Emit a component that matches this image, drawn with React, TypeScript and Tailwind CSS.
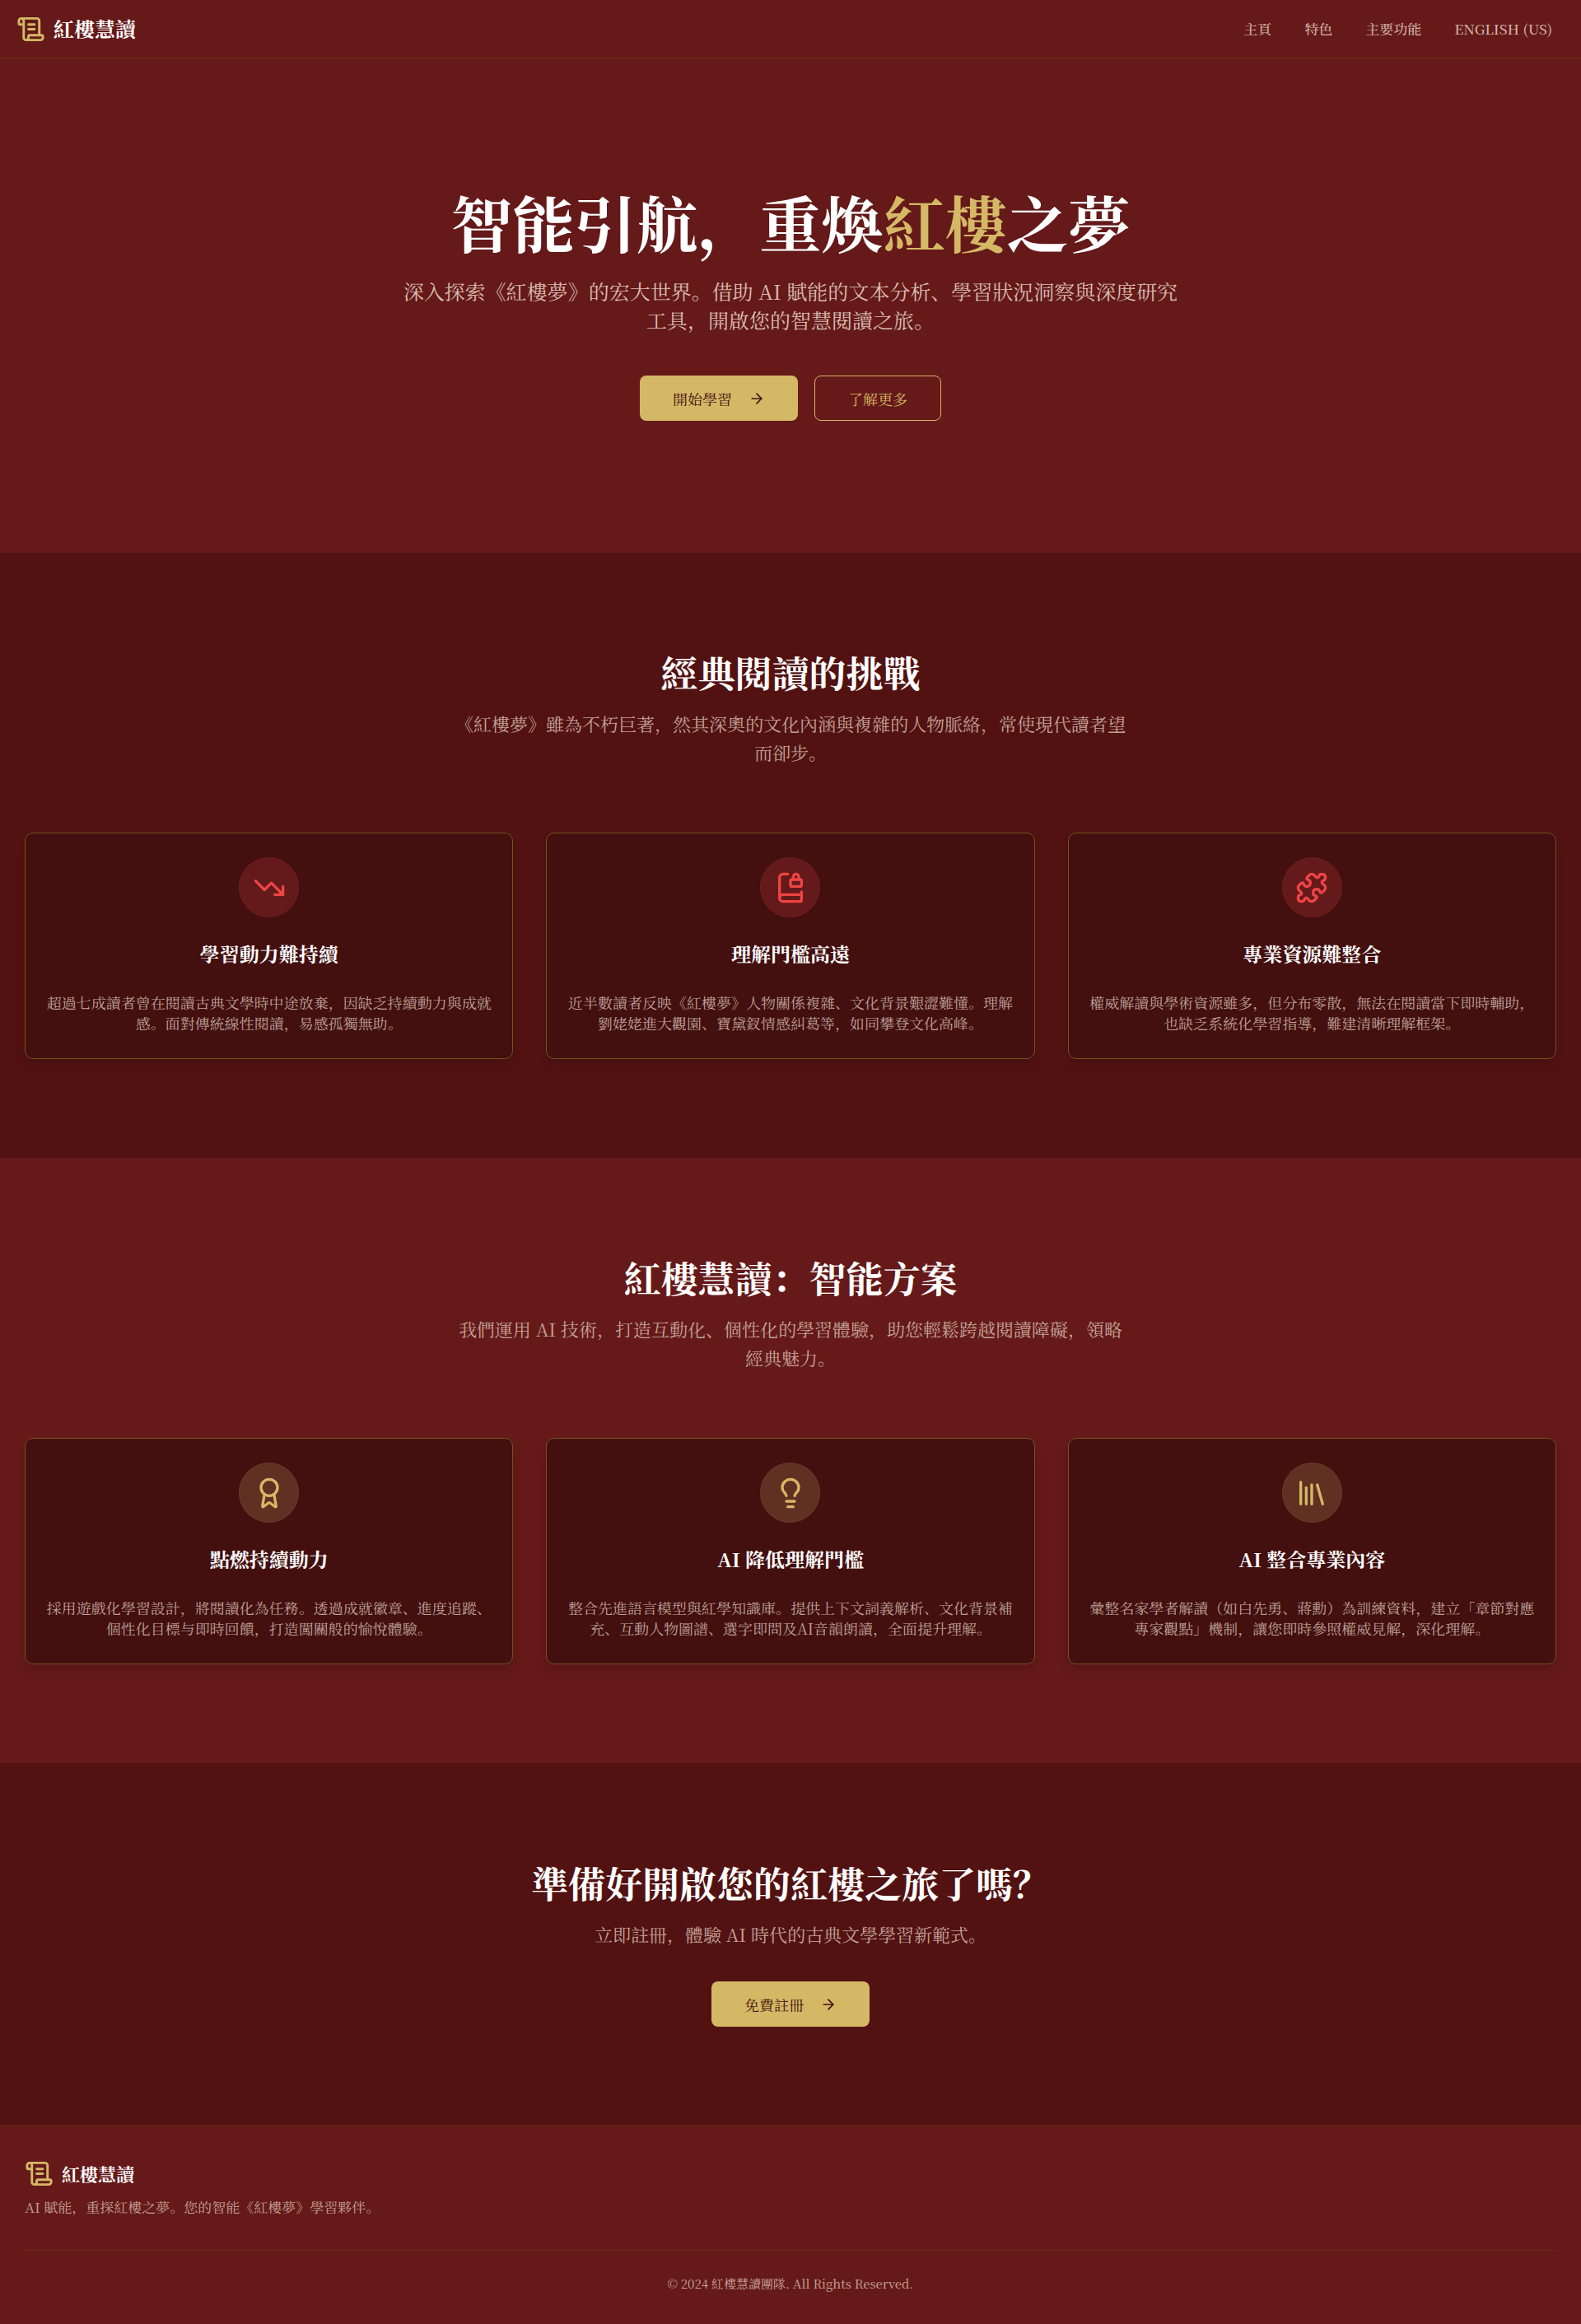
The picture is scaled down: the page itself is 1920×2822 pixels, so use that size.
import React from "react";
import {
  ArrowRight,
  Award,
  BookLock,
  Library,
  Lightbulb,
  Puzzle,
  ScrollText,
  TrendingDown,
  type LucideIcon,
} from "lucide-react";

type Feature = { icon: LucideIcon; title: string; text: string };

const challenges: Feature[] = [
  {
    icon: TrendingDown,
    title: "學習動力難持續",
    text: "超過七成讀者曾在閱讀古典文學時中途放棄，因缺乏持續動力與成就感。面對傳統線性閱讀，易感孤獨無助。",
  },
  {
    icon: BookLock,
    title: "理解門檻高遠",
    text: "近半數讀者反映《紅樓夢》人物關係複雜、文化背景艱澀難懂。理解劉姥姥進大觀園、寶黛釵情感糾葛等，如同攀登文化高峰。",
  },
  {
    icon: Puzzle,
    title: "專業資源難整合",
    text: "權威解讀與學術資源雖多，但分布零散，無法在閱讀當下即時輔助，也缺乏系統化學習指導，難建清晰理解框架。",
  },
];

const solutions: Feature[] = [
  {
    icon: Award,
    title: "點燃持續動力",
    text: "採用遊戲化學習設計，將閱讀化為任務。透過成就徽章、進度追蹤、個性化目標与即時回饋，打造闖關般的愉悅體驗。",
  },
  {
    icon: Lightbulb,
    title: "AI 降低理解門檻",
    text: "整合先進語言模型與紅學知識庫。提供上下文詞義解析、文化背景補充、互動人物圖譜、選字即問及AI音韻朗讀，全面提升理解。",
  },
  {
    icon: Library,
    title: "AI 整合專業內容",
    text: "彙整名家學者解讀（如白先勇、蔣勳）為訓練資料，建立「章節對應專家觀點」機制，讓您即時參照權威見解，深化理解。",
  },
];

function FeatureCard({ feature, tone }: { feature: Feature; tone: "red" | "gold" }) {
  const Icon = feature.icon;
  const badge =
    tone === "red"
      ? "border-[#731e1e] bg-[#641a1a] text-[#ef4444]"
      : "border-[#6b3c2a] bg-[#603022] text-[#d4b866]";
  return (
    <article className="flex flex-col items-center rounded-[10px] border border-[#74541f] bg-[#430f0f] px-6 pt-[29px] pb-[30px] text-center shadow-lg">
      <div className={`mb-[26px] flex size-[73px] items-center justify-center rounded-full border ${badge}`}>
        <Icon className="size-10" aria-hidden="true" />
      </div>
      <h3 className="mb-[30px] text-2xl leading-[35px] font-bold text-white">{feature.title}</h3>
      <p className="text-lg leading-[25px] text-[#bfa298]">{feature.text}</p>
    </article>
  );
}

function SectionHeading({ title, text }: { title: string; text: string }) {
  return (
    <div className="mx-auto flex max-w-[820px] flex-col gap-5 text-center">
      <h2 className="text-[45px] leading-[50px] font-bold text-white">{title}</h2>
      <p className="text-[22px] leading-[35px] text-[#c3a196]">{text}</p>
    </div>
  );
}

function FeatureSection({
  id,
  title,
  text,
  items,
  tone,
  background,
}: {
  id: string;
  title: string;
  text: string;
  items: Feature[];
  tone: "red" | "gold";
  background: string;
}) {
  return (
    <section id={id} className={`px-[30px] py-[120px] ${background}`}>
      <SectionHeading title={title} text={text} />
      <div className="mt-20 grid gap-10 md:grid-cols-3">
        {items.map((item) => (
          <FeatureCard key={item.title} feature={item} tone={tone} />
        ))}
      </div>
    </section>
  );
}

function PrimaryButton({ children }: { children: React.ReactNode }) {
  return (
    <button
      type="button"
      className="flex h-[55px] items-center gap-5 rounded-lg bg-[#d4b866] px-10 text-lg text-[#430f0f]"
    >
      {children}
      <ArrowRight className="size-5" aria-hidden="true" />
    </button>
  );
}

export default function App() {
  return (
    <div
      lang="zh-Hant"
      className="bg-[#651919] font-['Noto_Serif_SC','Noto_Serif_CJK_SC','Noto_Serif','Liberation_Serif','Noto_Sans_CJK_SC',serif]"
    >
      <header className="flex h-[71px] items-center justify-between border-b border-[#6d3313] pr-[35px] pl-5">
        <a href="#home" className="flex items-center gap-2.5 text-[25px] font-bold text-white">
          <ScrollText className="size-[35px] text-[#d4b866]" aria-hidden="true" />
          紅樓慧讀
        </a>
        <nav className="flex items-center gap-10 text-[17px] font-medium text-[#d4b5aa]">
          <a href="#home">主頁</a>
          <a href="#challenges">特色</a>
          <a href="#solutions">主要功能</a>
          <button type="button">ENGLISH (US)</button>
        </nav>
      </header>

      <main>
        <section id="home" className="flex flex-col items-center px-[30px] py-40 text-center">
          <h1 className="text-[75px] leading-[75px] font-bold text-white">
            智能引航，重煥<span className="text-[#d4b866]">紅樓</span>之夢
          </h1>
          <p className="mt-[30px] max-w-[960px] text-[25px] leading-[35px] text-[#d8bcb0]">
            深入探索《紅樓夢》的宏大世界。借助 AI 賦能的文本分析、學習狀況洞察與深度研究工具，開啟您的智慧閱讀之旅。
          </p>
          <div className="mt-[50px] flex gap-5">
            <PrimaryButton>開始學習</PrimaryButton>
            <button
              type="button"
              className="h-[55px] rounded-lg border border-[#d4b866] px-10 text-lg text-[#d4b866]"
            >
              了解更多
            </button>
          </div>
        </section>

        <FeatureSection
          id="challenges"
          title="經典閱讀的挑戰"
          text="《紅樓夢》雖為不朽巨著，然其深奧的文化內涵與複雜的人物脈絡，常使現代讀者望而卻步。"
          items={challenges}
          tone="red"
          background="bg-[#521212]"
        />
        <FeatureSection
          id="solutions"
          title="紅樓慧讀：智能方案"
          text="我們運用 AI 技術，打造互動化、個性化的學習體驗，助您輕鬆跨越閱讀障礙，領略經典魅力。"
          items={solutions}
          tone="gold"
          background="bg-[#651919]"
        />

        <section className="flex flex-col items-center gap-10 bg-[#521212] px-[30px] py-[120px]">
          <SectionHeading
            title="準備好開啟您的紅樓之旅了嗎？"
            text="立即註冊，體驗 AI 時代的古典文學學習新範式。"
          />
          <PrimaryButton>免費註冊</PrimaryButton>
        </section>
      </main>

      <footer className="border-t border-[#6d2f18] px-[30px] py-10">
        <a href="#home" className="flex items-center gap-2.5 text-[22px] leading-[35px] font-bold text-white">
          <ScrollText className="size-[35px] text-[#d4b866]" aria-hidden="true" />
          紅樓慧讀
        </a>
        <p className="mt-2.5 text-[17px] leading-[25px] text-[#c3a196]">
          AI 賦能，重探紅樓之夢。您的智能《紅樓夢》學習夥伴。
        </p>
        <p className="mt-10 border-t border-[#6d2f18] pt-[30px] text-center text-[15px] leading-5 text-[#c8a79c]">
          © 2024 紅樓慧讀團隊. All Rights Reserved.
        </p>
      </footer>
    </div>
  );
}
